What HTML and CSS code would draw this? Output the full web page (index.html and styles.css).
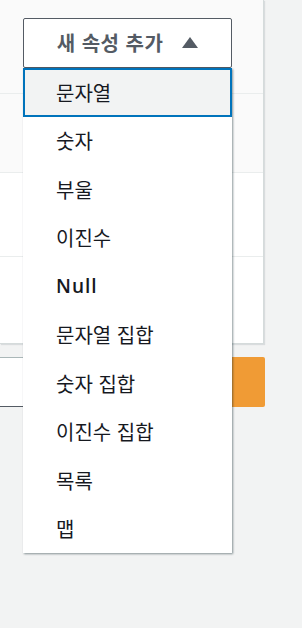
FILE: index.html
```html
<!DOCTYPE html>
<html lang="ko">
<head>
    <meta charset="UTF-8">
    <meta name="viewport" content="width=device-width, initial-scale=1.0">
    <title>새 속성 추가</title>
    <link rel="stylesheet" href="styles.css">
</head>
<body>
    <div class="panel">
        <div class="row row-top">
            <div class="add-attr">
                <button type="button" class="add-attr-btn">새 속성 추가 <span class="caret"></span></button>
                <ul class="menu">
                    <li class="menu-item active">문자열</li>
                    <li class="menu-item">숫자</li>
                    <li class="menu-item">부울</li>
                    <li class="menu-item">이진수</li>
                    <li class="menu-item latin">Null</li>
                    <li class="menu-item">문자열 집합</li>
                    <li class="menu-item">숫자 집합</li>
                    <li class="menu-item">이진수 집합</li>
                    <li class="menu-item">목록</li>
                    <li class="menu-item">맵</li>
                </ul>
            </div>
        </div>
        <div class="row row-grey"></div>
        <div class="row row-mid"></div>
        <div class="row row-last"></div>
    </div>

    <div class="input-row">
        <input type="text" class="text-input">
        <button type="button" class="go-btn"></button>
    </div>
</body>
</html>
```

FILE: styles.css
```css
html, body {
    min-height: 628px;
}
body {
    font-family: "Noto Sans CJK KR", "Noto Sans", sans-serif;
    background-color: #f2f3f3;
    margin: 0;
    padding: 0;
}
.panel {
    width: 263px;
    background-color: #fff;
    border-right: 1px solid #d5dbdb;
    border-bottom: 1px solid #d5dbdb;
    box-shadow: 1px 1px 1px rgba(0, 22, 43, 0.1);
}
.row {
    border-bottom: 1px solid #eaeded;
}
.row-top {
    height: 94px;
    background-color: #fafafa;
    box-sizing: border-box;
    padding: 18px 0 0 23px;
}
.row-grey {
    height: 78px;
    background-color: #fafafa;
}
.row-mid {
    height: 83px;
}
.row-last {
    height: 86px;
    border-bottom: none;
}
.add-attr {
    position: relative;
    width: 209px;
    z-index: 10;
}
.add-attr-btn {
    width: 209px;
    height: 50px;
    background-color: #fff;
    border: 1px solid #545b64;
    border-radius: 2px;
    color: #545b64;
    font-family: "Noto Sans CJK KR", sans-serif;
    font-size: 20px;
    font-weight: bold;
    letter-spacing: 0.5px;
    padding: 0 0 2px 0;
    display: flex;
    align-items: center;
    justify-content: center;
    gap: 19px;
    cursor: pointer;
}
.caret {
    width: 0;
    height: 0;
    border-left: 8px solid transparent;
    border-right: 8px solid transparent;
    border-bottom: 11px solid #545b64;
}
.menu {
    position: absolute;
    top: 50px;
    left: 0;
    width: 209px;
    margin: 0;
    padding: 0;
    list-style: none;
    background-color: #fff;
    box-shadow: 1px 1px 2px rgba(0, 28, 36, 0.45);
}
.menu-item {
    height: 48.5px;
    box-sizing: border-box;
    display: flex;
    align-items: center;
    padding-left: 33px;
    font-size: 20px;
    color: #16191f;
}
.menu-item.active {
    background-color: #f2f3f3;
    border: 2px solid #0073bb;
    padding-left: 31px;
}
.menu-item.latin {
    font-family: "Open Sans", sans-serif;
    font-weight: 600;
    font-size: 19px;
    letter-spacing: 1px;
}
.input-row {
    display: flex;
    margin-top: 13px;
    width: 265px;
}
.text-input {
    width: 232px;
    height: 50px;
    box-sizing: border-box;
    border: none;
    border-top: 1px solid #aab7b8;
    border-bottom: 1px solid #545b64;
    background-color: #fff;
}
.go-btn {
    flex: 1;
    height: 50px;
    border: none;
    border-radius: 0 2px 2px 0;
    background-color: #f09b35;
}
```
